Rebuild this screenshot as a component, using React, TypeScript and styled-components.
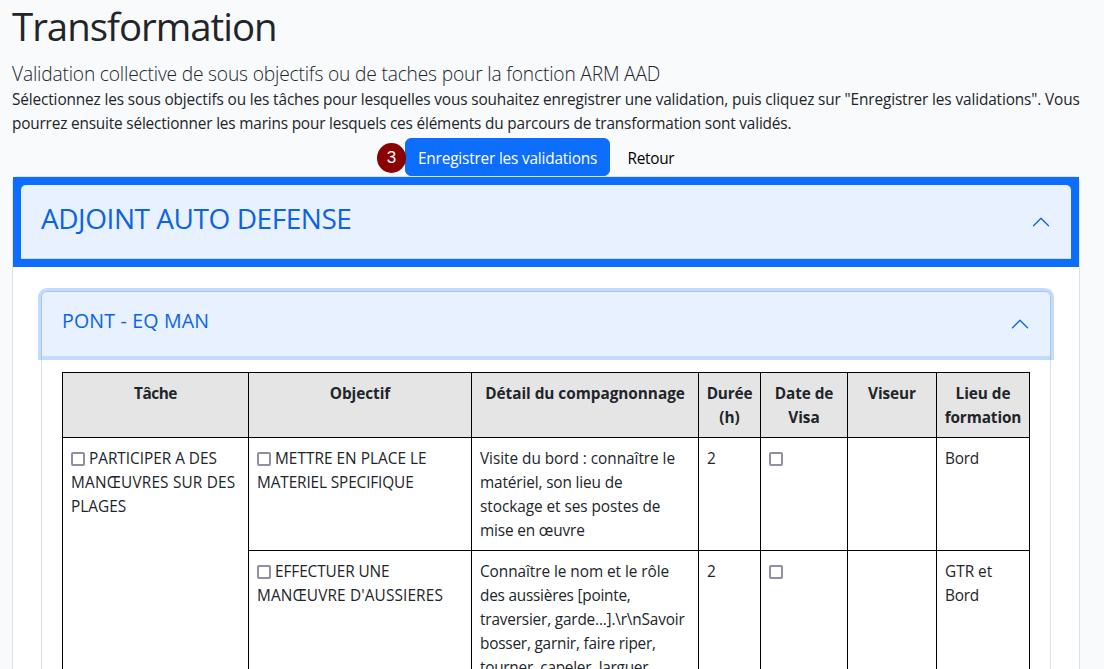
import React from 'react';
import styled, { createGlobalStyle } from 'styled-components';

const GlobalStyle = createGlobalStyle`
  *, *::before, *::after { box-sizing: border-box; }
  html { overflow: hidden; }
  body {
    margin: 0;
    height: 669px;
    overflow: hidden;
    background: #f8fafc;
    color: #212529;
    font-family: "Open Sans", "Noto Sans", sans-serif;
    font-size: 15.36px;
    line-height: 24px;
  }
`;

/* One line of text; $ls is the tracking in pixels. */
const Line = styled.span<{ $ls?: number }>`
  display: block;
  white-space: pre;
  letter-spacing: ${({ $ls = 0 }) => $ls}px;
`;

const Page = styled.main`
  width: 1104px;
  height: 669px;
  overflow: hidden;
  padding: 2px 24px 0 12px;
`;

const Title = styled.h1`
  margin: 0 0 8px;
  font-size: 38.4px;
  font-weight: 400;
  line-height: 48px;
`;

const Lead = styled.p`
  margin: 0;
  padding-top: 1px;
  font-size: 19.2px;
  font-weight: 300;
  line-height: 29px;
`;

const Intro = styled.p`
  margin: 0;
`;

const Actions = styled.div`
  display: flex;
  align-items: center;
  height: 38px;
  margin: 2px 0 0 365px;
`;

const StepBadge = styled.span`
  display: flex;
  align-items: center;
  justify-content: center;
  position: relative;
  z-index: 1;
  width: 29px;
  height: 30px;
  margin: 1px -1px 0 0;
  border-radius: 50%;
  background: #8b0000;
  color: #fff;
  font: 17px/30px "Liberation Sans", sans-serif;
`;

const Button = styled.button<{ $primary?: boolean }>`
  height: 38px;
  padding: 3px 12px 0;
  border: 1px solid ${({ $primary }) => ($primary ? '#0d6efd' : 'transparent')};
  border-radius: 6px;
  background: ${({ $primary }) => ($primary ? '#0d6efd' : 'transparent')};
  color: ${({ $primary }) => ($primary ? '#fff' : '#000')};
  width: ${({ $primary }) => ($primary ? '205px' : 'auto')};
  margin-right: 4.6px;
  font: inherit;
`;

const Accordion = styled.section`
  width: 1068px;
  border: 1px solid #dee2e6;
  border-radius: 6px 6px 0 0;
  background: #fff;
`;

const OuterHeader = styled.h2`
  margin: 0;
  padding: 8px;
  background: #0d6efd;
  font-weight: 400;
`;

const Toggle = styled.button<{ $focused?: boolean }>`
  display: flex;
  align-items: center;
  justify-content: space-between;
  width: 100%;
  height: ${({ $focused }) => ($focused ? '64px' : '74px')};
  padding: 0 20px;
  border: 0;
  border-radius: 5px 5px 0 0;
  background: #e7f1ff;
  color: #0c63e4;
  font-family: inherit;
  font-size: ${({ $focused }) => ($focused ? '19.6px' : '28px')};
  line-height: ${({ $focused }) => ($focused ? '24px' : '34px')};
  box-shadow: ${({ $focused }) =>
    $focused ? '0 0 0 4px rgba(13, 110, 253, 0.25)' : 'inset 0 -1px 0 #d0d9e4'};
`;

const ToggleLabel = styled.span<{ $lift: number }>`
  padding-bottom: ${({ $lift }) => $lift}px;
`;

const Chevron = styled.svg`
  width: 20px;
  height: 20px;
  flex: none;
`;

const OuterBody = styled.div`
  padding: 24px 28px 0;
`;

const InnerAccordion = styled(Accordion)`
  width: 1010px;
`;

const InnerBody = styled.div`
  padding: 16px 20px 0;
`;

const Table = styled.table`
  width: 968px;
  border-collapse: collapse;
  table-layout: fixed;
`;

const HeadCell = styled.th`
  height: 65px;
  padding: 9px 0 7px;
  border: 1px solid #000;
  background: #e5e5e5;
  font-weight: 700;
  text-align: center;
  vertical-align: top;
`;

const Cell = styled.td`
  padding: 9px 0 7px 8px;
  border: 1px solid #000;
  vertical-align: top;
`;

const Check = styled.input.attrs({ type: 'checkbox' })`
  appearance: none;
  display: inline-block;
  width: 14px;
  height: 14px;
  margin: 0 4px 0 0;
  border: 2px solid #8f8f9d;
  border-radius: 2px;
  background: #fff;
  vertical-align: -2px;
`;

type TextLine = [text: string, ls: number];

const columns: { width: number; lines: TextLine[] }[] = [
  { width: 186, lines: [['Tâche', -0.45]] },
  { width: 223, lines: [['Objectif', -0.05]] },
  { width: 227, lines: [['Détail du compagnonnage', -0.04]] },
  { width: 62, lines: [['Durée', -0.2], ['(h)', 0]] },
  { width: 87, lines: [['Date de', -0.08], ['Visa', 0]] },
  { width: 89, lines: [['Viseur', -0.1]] },
  { width: 93, lines: [['Lieu de', -0.05], ['formation', -0.12]] },
];

const task: TextLine[] = [['PARTICIPER A DES', -0.02], ['MANŒUVRES SUR DES', 0.18], ['PLAGES', 0]];

const rows: { goal: TextLine[]; detail: TextLine[]; place: TextLine[] }[] = [
  {
    goal: [['METTRE EN PLACE LE', 0.03], ['MATERIEL SPECIFIQUE', -0.12]],
    detail: [
      ['Visite du bord : connaître le', -0.04],
      ['matériel, son lieu de', -0.13],
      ['stockage et ses postes de', -0.05],
      ['mise en œuvre', -0.15],
    ],
    place: [['Bord', -0.25]],
  },
  {
    goal: [['EFFECTUER UNE', -0.08], ["MANŒUVRE D'AUSSIERES", 0.14]],
    detail: [
      ['Connaître le nom et le rôle', -0.05],
      ['des aussières [pointe,', -0.23],
      ['traversier, garde...].\\r\\nSavoir', -0.18],
      ['bosser, garnir, faire riper,', -0.21],
      ['tourner, capeler, larguer,', -0.26],
    ],
    place: [['GTR et', 0], ['Bord', -0.25]],
  },
];

const Lines = ({ lines, check }: { lines: TextLine[]; check?: boolean }) => (
  <>
    {lines.map(([text, ls], i) => (
      <Line key={text} $ls={ls}>
        {check && i === 0 && <Check />}
        {text}
      </Line>
    ))}
  </>
);

const ChevronUp = () => (
  <Chevron viewBox="0 0 16 16" fill="#0c63e4">
    <path
      fillRule="evenodd"
      d="M14.354 11.354a.5.5 0 0 1-.708 0L8 5.707l-5.646 5.647a.5.5 0 0 1-.708-.708l6-6a.5.5 0 0 1 .708 0l6 6a.5.5 0 0 1 0 .708z"
    />
  </Chevron>
);

export default function App() {
  return (
    <Page>
      <GlobalStyle />
      <Title>
        <Line $ls={-1}>Transformation</Line>
      </Title>
      <Lead>
        <Line $ls={-0.178}>Validation collective de sous objectifs ou de taches pour la fonction ARM AAD</Line>
      </Lead>
      <Intro>
        <Line $ls={-0.126}>
          Sélectionnez les sous objectifs ou les tâches pour lesquelles vous souhaitez enregistrer une validation, puis cliquez sur "Enregistrer les validations". Vous
        </Line>
        <Line $ls={-0.178}>
          pourrez ensuite sélectionner les marins pour lesquels ces éléments du parcours de transformation sont validés.
        </Line>
      </Intro>
      <Actions>
        <StepBadge>3</StepBadge>
        <Button $primary>
          <Line $ls={-0.18}>Enregistrer les validations</Line>
        </Button>
        <Button>
          <Line $ls={-0.3}>Retour</Line>
        </Button>
      </Actions>
      <Accordion>
        <OuterHeader>
          <Toggle>
            <ToggleLabel $lift={8}>
              <Line $ls={-0.45}>ADJOINT AUTO DEFENSE</Line>
            </ToggleLabel>
            <ChevronUp />
          </Toggle>
        </OuterHeader>
        <OuterBody>
          <InnerAccordion>
            <Toggle $focused>
              <ToggleLabel $lift={6}>
                <Line $ls={0.17}>PONT - EQ MAN</Line>
              </ToggleLabel>
              <ChevronUp />
            </Toggle>
            <InnerBody>
              <Table>
                <colgroup>
                  {columns.map(({ width }, i) => (
                    <col key={i} width={width} />
                  ))}
                </colgroup>
                <thead>
                  <tr>
                    {columns.map(({ lines }) => (
                      <HeadCell key={lines[0][0]}>
                        <Lines lines={lines} />
                      </HeadCell>
                    ))}
                  </tr>
                </thead>
                <tbody>
                  {rows.map(({ goal, detail, place }, i) => (
                    <tr key={goal[0][0]}>
                      {i === 0 && (
                        <Cell rowSpan={rows.length}>
                          <Lines lines={task} check />
                        </Cell>
                      )}
                      <Cell>
                        <Lines lines={goal} check />
                      </Cell>
                      <Cell>
                        <Lines lines={detail} />
                      </Cell>
                      <Cell>2</Cell>
                      <Cell>
                        <Check />
                      </Cell>
                      <Cell />
                      <Cell>
                        <Lines lines={place} />
                      </Cell>
                    </tr>
                  ))}
                </tbody>
              </Table>
            </InnerBody>
          </InnerAccordion>
        </OuterBody>
      </Accordion>
    </Page>
  );
}
